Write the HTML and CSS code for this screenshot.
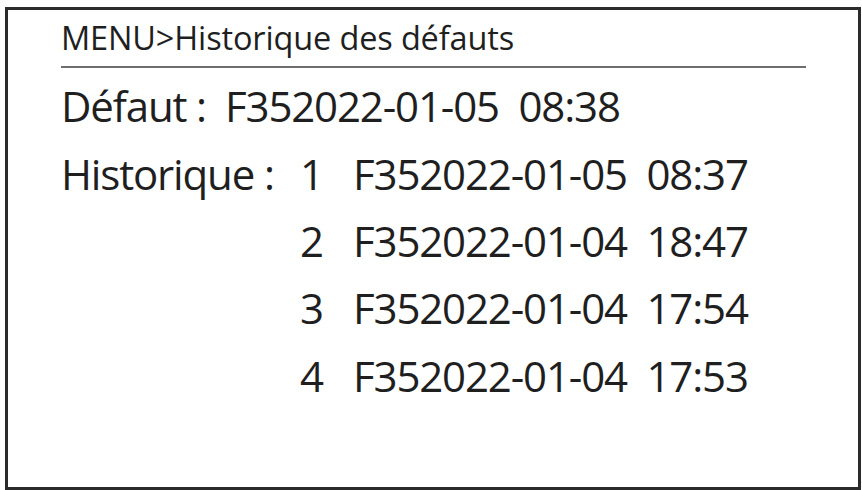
FILE: index.html
```html
<!DOCTYPE html>
<html lang="fr">
<head>
<meta charset="utf-8">
<link rel="stylesheet" href="styles.css">
</head>
<body>
<div class="screen">
  <div class="title">MENU&gt;Historique des défauts</div>
  <div class="row current"><span class="current-label">Défaut :</span><span class="entry">F352022-01-05  08:38</span></div>
  <div class="history">
    <div class="label">Historique :</div>
    <div class="num">1</div><div class="entry">F352022-01-05  08:37</div>
    <div class="num">2</div><div class="entry">F352022-01-04  18:47</div>
    <div class="num">3</div><div class="entry">F352022-01-04  17:54</div>
    <div class="num">4</div><div class="entry">F352022-01-04  17:53</div>
  </div>
</div>
</body>
</html>
```
FILE: styles.css
```css
html, body {
  margin: 0;
  padding: 0;
  background: #fefefe;
}
body {
  width: 862px;
  height: 490px;
  overflow: hidden;
  font-family: "Open Sans", "Noto Sans", sans-serif;
  color: #1f1f1f;
}
.screen {
  box-sizing: border-box;
  margin: 7px 0 0 5px;
  width: 856px;
  height: 483px;
  border: 3px solid #2b2b2b;
  padding: 8px 0 0 53px;
  background: #ffffff;
}
.title {
  width: 745px;
  font-size: 32.5px;
  line-height: 40px;
  letter-spacing: -0.15px;
  padding-bottom: 8px;
  border-bottom: 2px solid #6e6e6e;
  white-space: pre;
}
.row, .history {
  font-size: 42px;
  line-height: 67px;
  letter-spacing: -1.15px;
  white-space: pre;
}
.current {
  margin-top: 4px;
  height: 68px;
  display: flex;
}
.current-label {
  width: 164px;
  flex: none;
}
.history {
  display: grid;
  grid-template-columns: 239px 53px auto;
  grid-auto-rows: 67.2px;
}
.label {
  grid-column: 1;
}
.num {
  grid-column: 2;
}
.history .entry {
  grid-column: 3;
}
```
